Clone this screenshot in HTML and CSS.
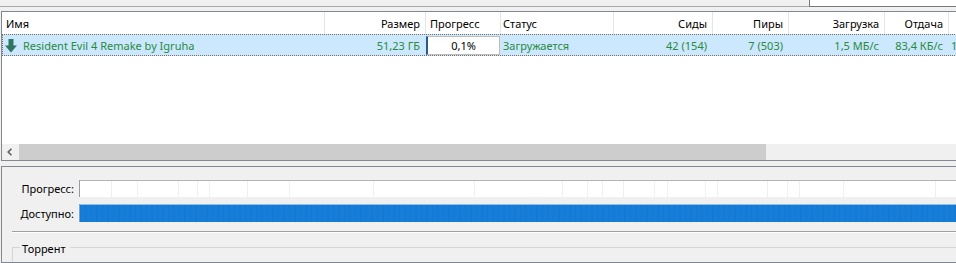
FILE: index.html
```html
<!DOCTYPE html>
<html lang="ru">
<head>
<meta charset="utf-8">
<link rel="stylesheet" href="styles.css">
</head>
<body>
<div class="topbar">
  <div class="topbar-left"></div>
  <div class="search"></div>
</div>
<div class="table">
  <div class="grid head">
    <div class="hc l">Имя</div>
    <div class="hc r">Размер</div>
    <div class="hc l">Прогресс</div>
    <div class="hc l st">Статус</div>
    <div class="hc r">Сиды</div>
    <div class="hc r">Пиры</div>
    <div class="hc r">Загрузка</div>
    <div class="hc r">Отдача</div>
    <div class="hc last"></div>
  </div>
  <div class="grid row">
    <div class="c l name">
      <svg class="dl" width="12" height="14" viewBox="0 0 12 14"><path d="M3.5 0h5v6.5H12L6 13.5 0 6.5h3.5z" fill="#2f7560"/></svg>
      <span>Resident Evil 4 Remake by Igruha</span>
    </div>
    <div class="c r">51,23 ГБ</div>
    <div class="c prog"><div class="pbox">0,1%</div></div>
    <div class="c l st">Загружается</div>
    <div class="c r">42 (154)</div>
    <div class="c r">7 (503)</div>
    <div class="c r">1,5 МБ/с</div>
    <div class="c r">83,4 КБ/с</div>
    <div class="c l eta">1ч</div>
  </div>
  <div class="empty"></div>
  <div class="hscroll">
    <div class="arrow"><svg width="8" height="8" viewBox="0 0 8 8"><path d="M5.5 0.8 2.2 4l3.3 3.2" fill="none" stroke="#606060" stroke-width="1.6"/></svg></div>
    <div class="thumb"></div>
    <div class="track"></div>
  </div>
</div>
<div class="panel">
  <div class="prow">
    <div class="plabel">Прогресс:</div>
    <div class="pbar">
      <span class="seg" style="width:31px"></span><span class="seg ln" style="width:26px"></span><span class="seg ln" style="width:41px"></span><span class="seg ln" style="width:19px"></span><span class="seg ln" style="width:12px"></span><span class="seg ln" style="width:38px"></span><span class="seg ln" style="width:42px"></span><span class="seg ln" style="width:84px"></span><span class="seg ln" style="width:101px"></span><span class="seg ln" style="width:88px"></span><span class="seg ln" style="width:25px"></span><span class="seg ln" style="width:15px"></span><span class="seg ln" style="width:21px"></span><span class="seg ln" style="width:31px"></span><span class="seg ln" style="width:13px"></span><span class="seg ln" style="width:38px"></span><span class="seg ln" style="width:12px"></span><span class="seg ln" style="width:50px"></span><span class="seg ln" style="width:20px"></span><span class="seg ln" style="width:12px"></span><span class="seg ln" style="width:44px"></span><span class="seg ln" style="width:92px"></span><span class="seg ln" style="width:60px"></span>
    </div>
  </div>
  <div class="prow avail">
    <div class="plabel">Доступно:</div>
    <div class="abar"></div>
  </div>
  <div class="sep"></div>
  <div class="group">
    <span class="glabel">Торрент</span>
  </div>
</div>
</body>
</html>
```
FILE: styles.css
```css
* { box-sizing: border-box; }
html, body { margin: 0; padding: 0; }
body {
  width: 956px;
  height: 263px;
  overflow: hidden;
  background: #f0f0f0;
  font-family: "Noto Sans", "Open Sans", sans-serif;
  font-size: 11px;
  color: #000;
}
.topbar {
  display: flex;
  height: 7px;
}
.topbar-left {
  flex: 1;
  border-bottom: 1px solid #a9a9a9;
}
.search {
  width: 147px;
  background: #fff;
  border-left: 1px solid #7a7a7a;
  border-bottom: 1px solid #7a7a7a;
}
.table {
  margin: 4px 0 0 1px;
  border-top: 1px solid #828790;
  border-left: 1px solid #828790;
  border-bottom: 1px solid #828790;
  background: #fff;
  width: 980px;
}
.grid {
  display: grid;
  grid-template-columns: 323px 101px 75px 113px 99px 76px 96px 64px 1fr;
}
.head { height: 22px; }
.hc {
  border-right: 1px solid #e5e5e5;
  line-height: 20px;
  padding: 2px 5px 0 4px;
  white-space: nowrap;
  overflow: hidden;
}
.hc.last { border-right: none; }
.l { text-align: left; }
.r { text-align: right; }
.hc.st, .c.st { padding-left: 2px; }
.row {
  height: 22px;
  background: #cce8ff;
  outline: 1px dotted #7d6e5e;
  outline-offset: -1px;
  color: #2a8a3c;
}
.c {
  line-height: 21px;
  padding: 1px 6px 0 4px;
  white-space: nowrap;
  overflow: hidden;
}
.name {
  display: flex;
  align-items: center;
  gap: 6px;
  padding-left: 3px;
}
.dl { flex: none; margin-top: 0; }
.prog { padding: 2px 1px 1px 0; }
.pbox {
  height: 19px;
  background: #fff;
  border: 1px solid #bcbcbc;
  border-left: 2px solid #2b5b8c;
  color: #000;
  text-align: center;
  line-height: 17px;
}
.eta { padding-left: 2px; }
.empty { height: 88px; }
.hscroll {
  display: flex;
  height: 16px;
  background: #f0f0f0;
}
.arrow {
  width: 17px;
  display: flex;
  align-items: center;
  justify-content: center;
  padding-right: 2px;
}
.thumb {
  width: 747px;
  background: #cdcdcd;
}
.track { flex: 1; }
.panel {
  margin: 5px 0 0 1px;
  height: 97px;
  width: 980px;
  border-top: 1px solid #828790;
  border-left: 1px solid #828790;
  border-bottom: 1px solid #828790;
  padding-top: 13px;
  overflow: hidden;
}
.prow {
  display: flex;
  align-items: stretch;
  height: 17px;
}
.prow.avail {
  margin-top: 7px;
  height: 18px;
}
.plabel {
  flex: none;
  width: 72px;
  text-align: right;
  line-height: 18px;
  margin-right: 5px;
  white-space: nowrap;
}
.avail .plabel { line-height: 19px; }
.pbar {
  flex: 1;
  min-width: 0;
  overflow: hidden;
  display: flex;
  background: #fff;
  border-top: 1px solid #b4b4b4;
  border-left: 1px solid #9a9a9a;
}
.seg { display: block; height: 100%; flex: none; }
.seg.ln { border-left: 1px solid #ecf2ec; }
.abar {
  flex: 1;
  min-width: 0;
  border-top: 1px solid #8cc0ea;
  border-left: 1px solid #7aa3c8;
  background-color: #167dd8;
  background-image: repeating-linear-gradient(90deg, rgba(0,40,120,0.06) 0 1px, transparent 1px 5px, rgba(0,40,120,0.04) 5px 7px, transparent 7px 11px);
}
.sep {
  margin: 9px 0 0 10px;
  height: 2px;
  border-top: 1px solid #a0a0a0;
  border-bottom: 1px solid #ffffff;
}
.group {
  position: relative;
  margin: 14px 0 0 10px;
  height: 20px;
  border-top: 1px solid #d5d5d5;
  border-left: 1px solid #d5d5d5;
}
.glabel {
  position: absolute;
  left: 7px;
  top: -7px;
  padding: 0 4px 0 2px;
  background: #f0f0f0;
  line-height: 16px;
}
```
